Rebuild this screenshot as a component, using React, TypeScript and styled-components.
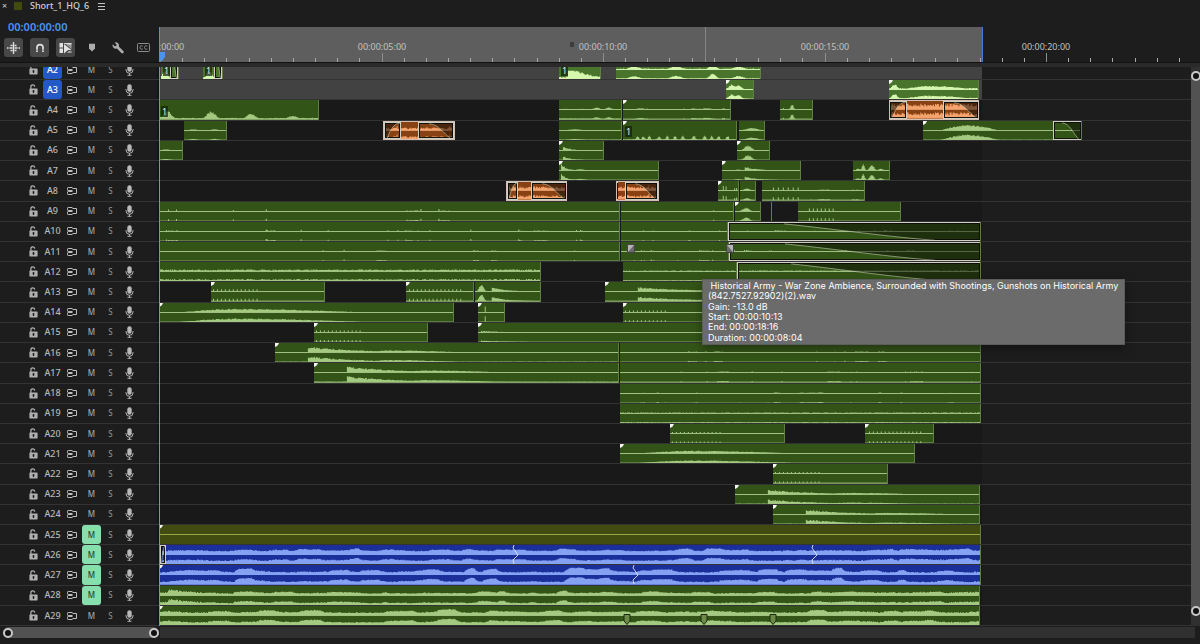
import React from 'react';
import styled, { createGlobalStyle, css } from 'styled-components';

const HEAD = 159;
const END = 982;
const PX_PER_SECOND = 44.3;

const GlobalStyle = createGlobalStyle`
  * { box-sizing: border-box; }
  body { margin: 0; background: #1d1d1d; overflow: hidden; }
  button { font: inherit; color: inherit; border: 0; padding: 0; background: none; }
  svg { display: block; }
`;

/* ---------- waveform synthesis ---------- */

type Shape = (x: number, rnd: () => number) => number;

const random = (seed: number) => () => {
  seed = (seed * 1664525 + 1013904223) % 4294967296;
  return seed / 4294967296;
};

const hump = (center: number, width: number, height: number): Shape => (x, r) => {
  const d = (x - center) / width;
  return height * Math.exp(-d * d) * (0.85 + r() * 0.3);
};
const swell = (from: number, peak: number, to: number, height: number): Shape => (x, r) => {
  if (x < from || x > to) return 0;
  const k = x < peak ? (x - from) / (peak - from) : (to - x) / (to - peak);
  return height * Math.sin((k * Math.PI) / 2) * (0.75 + r() * 0.3);
};
const decay = (from: number, length: number, height: number): Shape => (x, r) =>
  x < from ? 0 : height * Math.exp(-(x - from) / length) * (0.75 + r() * 0.35);
const dots = (from: number, to: number, period: number, height: number): Shape => (x) =>
  x < from || x > to ? 0 : (x - from) % period < 1 ? height : 0;
const spikes = (at: number[], height: number): Shape => (x, r) =>
  at.some((s) => Math.abs(s - x) < 1) ? height * (0.5 + r() * 0.5) : 0;
const hiss = (level: number): Shape => (_x, r) => level * (0.5 + r() * 0.5);
const sparse = (height: number): Shape => {
  let hold = 0;
  return (_x, r) => {
    if (hold > 0) {
      hold -= 1;
      return 0.5 + r() * 0.7;
    }
    const v = r();
    if (v > 0.985) hold = Math.floor(r() * 14);
    return v > 0.965 ? height * (0.5 + r() * 0.5) : 0;
  };
};
const music = (base: number, height: number): Shape => {
  let target = 0;
  let level = 0;
  let left = 0;
  return (_x, r) => {
    if (left <= 0) {
      left = 5 + r() * 16;
      target = r() * r() * height;
    }
    left -= 1;
    level += (target - level) * 0.3;
    return base + level + r() * 0.9;
  };
};

const wavePath = (from: number, to: number, baseline: number, shapes: Shape[], seed: number) => {
  const r = random(seed);
  let d = `M0 ${baseline}`;
  for (let x = from; x < to; x += 1) {
    const amp = Math.min(8.4, Math.max(0, ...shapes.map((s) => s(x, r))));
    d += `V${(baseline - amp).toFixed(1)}H${x - from + 1}`;
  }
  return `${d}V${baseline}Z`;
};

/* ---------- sequence data ---------- */

type Tone = 'green' | 'bright' | 'orange' | 'blue' | 'olive';
interface Fade { from: number; to: number; dir: 'in' | 'out' | 'long' }
interface Clip {
  from: number;
  to: number;
  wave: () => Shape[];
  tone?: Tone;
  mono?: boolean;
  corner?: boolean;
  badge?: boolean;
  framed?: boolean;
  fades?: Fade[];
}
interface Track {
  name: string;
  targeted?: boolean;
  muted?: boolean;
  clips: Clip[];
  cuts?: number[];
  markers?: number[];
  transitions?: number[];
}

const clip = (from: number, to: number, wave: () => Shape[], extra: Partial<Clip> = {}): Clip => ({ from, to, wave, ...extra });
const c = { corner: true };
const orange = (from: number, to: number, fades: Fade[], level = 3.4) =>
  clip(from, to, () => [hiss(level), sparse(level + 2)], { tone: 'orange', framed: true, fades });
const none = () => [];
const burst = (x: number, h: number) => () => [decay(x, 52, h), swell(x + 55, x + 80, x + 160, h * 0.4), hiss(0.5)];

const tracks: Track[] = [
  {
    name: 'A2',
    targeted: true,
    clips: [
      clip(161, 179, () => [hiss(2.5), hump(165, 4, 8)], { tone: 'bright', mono: true, badge: true, fades: [{ from: 170, to: 178, dir: 'out' }] }),
      clip(203, 223, () => [hiss(2.5), hump(209, 4, 8)], { tone: 'bright', mono: true, badge: true, fades: [{ from: 214, to: 222, dir: 'out' }] }),
      clip(559, 601, () => [decay(568, 20, 13), hiss(3)], { tone: 'bright', mono: true, badge: true, ...c }),
      clip(616, 761, () => [hiss(1), hump(634, 7, 3), hump(676, 8, 3), hump(713, 5, 5), hump(739, 7, 3)], { tone: 'bright' }),
    ],
  },
  {
    name: 'A3',
    targeted: true,
    clips: [
      clip(726, 754, () => [hump(732, 5, 4.5), hump(738, 5, 4), hiss(0.5)], { tone: 'bright', ...c }),
      clip(889, 979, () => [hump(894, 4, 5), swell(900, 930, 979, 3.6), hiss(1.6)], { tone: 'bright', ...c }),
    ],
  },
  {
    name: 'A4',
    clips: [
      clip(159, 319, () => [hiss(1.4), hump(167, 6, 7), hump(211, 6, 7), hump(251, 6, 5), hump(293, 7, 3)], { mono: true, badge: true }),
      clip(559, 622, () => [hump(597, 4, 2), hump(609, 4, 2), hiss(0.8)]),
      clip(623, 731, () => [sparse(1.5), hump(640, 5, 1.3), hump(707, 7, 1.3)], c),
      clip(780, 813, () => [hump(792, 2, 5), sparse(2)]),
      orange(889, 979, [{ from: 889, to: 907, dir: 'in' }, { from: 943, to: 979, dir: 'out' }], 6.5),
    ],
  },
  {
    name: 'A5',
    clips: [
      clip(184, 227, () => [hump(193, 5, 1.3), hump(215, 5, 1.3)]),
      orange(383, 455, [{ from: 384, to: 401, dir: 'in' }, { from: 418, to: 454, dir: 'out' }]),
      clip(559, 622, () => [hiss(0.6), hump(575, 10, 1.2)]),
      clip(623, 737, () => [637, 643, 649, 659, 667, 675, 683, 694, 705, 712, 719, 728].map((x) => hump(x, 2, 4)).concat(hiss(1.2)), { mono: true, badge: true, ...c }),
      clip(739, 765, () => [hump(752, 9, 2.4)]),
      clip(923, 1082, () => [swell(939, 968, 1000, 5.5), hiss(0.4)], { ...c, fades: [{ from: 1053, to: 1082, dir: 'out' }] }),
    ],
  },
  {
    name: 'A6',
    clips: [
      clip(159, 183, () => [hump(166, 6, 1.2)]),
      clip(559, 604, () => [decay(563, 9, 3.6)], c),
      clip(737, 770, () => [hump(748, 5, 4.6)], c),
    ],
  },
  {
    name: 'A7',
    clips: [
      clip(559, 659, () => [decay(561, 6, 6), hump(580, 6, 1.3)], c),
      clip(722, 801, () => [decay(745, 14, 3.4), hump(738, 4, 1)], c),
      clip(853, 890, () => [hump(858, 3, 2), hump(863, 2, 5.5), hump(872, 3, 5.5), hump(881, 3, 2)]),
    ],
  },
  {
    name: 'A8',
    clips: [
      orange(506, 567, [{ from: 507, to: 518, dir: 'in' }, { from: 531, to: 567, dir: 'out' }], 4.4),
      orange(616, 659, [{ from: 616, to: 618, dir: 'in' }, { from: 625, to: 658, dir: 'out' }], 4.4),
      clip(718, 739, () => [spikes([723, 726], 6), spikes([735, 737], 3)], c),
      clip(740, 756, () => [hump(747, 4, 2)]),
      clip(762, 865, () => [dots(773, 800, 5, 3), sparse(1)]),
    ],
  },
  {
    name: 'A9',
    clips: [
      clip(159, 620, () => [sparse(2.6)]),
      clip(621, 734, () => [sparse(2.4)]),
      clip(735, 761, () => [hump(746, 5, 3.4)], c),
      clip(771, 772, none),
      clip(798, 901, () => [dots(809, 836, 4, 3)]),
    ],
  },
  {
    name: 'A10',
    clips: [
      clip(159, 620, () => [sparse(2.2)]),
      clip(621, 728, () => [sparse(1.6)]),
      clip(728, 981, () => [sparse(1.6)], { fades: [{ from: 728, to: 981, dir: 'long' }] }),
    ],
  },
  {
    name: 'A11',
    transitions: [631, 730],
    clips: [
      clip(159, 620, () => [sparse(2)]),
      clip(621, 729, () => [sparse(1.6)]),
      clip(729, 981, () => [sparse(2)], { fades: [{ from: 729, to: 981, dir: 'long' }] }),
    ],
  },
  {
    name: 'A12',
    clips: [
      clip(159, 541, () => [hiss(2.2)]),
      clip(623, 737, () => [hiss(1.1)]),
      clip(737, 981, () => [hiss(1.2)], { fades: [{ from: 737, to: 981, dir: 'long' }] }),
    ],
  },
  {
    name: 'A13',
    clips: [
      clip(211, 325, () => [dots(213, 260, 4, 2.4)], c),
      clip(406, 474, () => [dots(409, 463, 4, 2.4)], c),
      clip(475, 541, () => [hump(481, 3, 7), decay(492, 16, 4)]),
      clip(605, 800, () => [decay(638, 60, 4)], c),
    ],
  },
  {
    name: 'A14',
    clips: [
      clip(159, 454, () => [swell(176, 235, 370, 3.6)], c),
      clip(478, 505, () => [spikes([485], 7)], c),
      clip(623, 800, () => [dots(625, 667, 4, 2)], c),
    ],
  },
  {
    name: 'A15',
    clips: [
      clip(314, 428, () => [dots(316, 363, 4, 2.2)], c),
      clip(478, 800, () => [decay(481, 30, 1.6)], c),
    ],
  },
  { name: 'A16', clips: [clip(275, 619, burst(308, 5.5), c), clip(620, 981, () => [sparse(1.4)])] },
  { name: 'A17', clips: [clip(314, 619, burst(347, 5.5), c), clip(620, 981, () => [sparse(1.3)])] },
  { name: 'A18', clips: [clip(620, 981, () => [sparse(0.9)])] },
  { name: 'A19', clips: [clip(620, 981, () => [hiss(1.2)])] },
  { name: 'A20', clips: [clip(670, 785, () => [dots(672, 720, 4, 1.6)], c), clip(865, 934, () => [dots(869, 923, 4, 2)], c)] },
  { name: 'A21', clips: [clip(620, 915, () => [swell(635, 694, 800, 2.8)], c)] },
  { name: 'A22', clips: [clip(773, 888, () => [dots(775, 822, 4, 1.6)], c)] },
  { name: 'A23', clips: [clip(735, 980, burst(768, 4.4), c)] },
  { name: 'A24', clips: [clip(773, 980, burst(806, 4.4), c)] },
  { name: 'A25', muted: true, clips: [clip(159, 981, none, { tone: 'olive', ...c })] },
  { name: 'A26', muted: true, cuts: [515, 814], clips: [clip(159, 981, () => [music(3, 3.2)], { tone: 'blue', fades: [{ from: 160, to: 166, dir: 'in' }] })] },
  { name: 'A27', muted: true, cuts: [635], clips: [clip(159, 981, () => [music(1.8, 5)], { tone: 'blue', ...c })] },
  { name: 'A28', muted: true, clips: [clip(159, 980, () => [decay(168, 50, 6), music(1.6, 3.8)])] },
  { name: 'A29', markers: [627, 704, 773], clips: [clip(159, 980, () => [music(2.4, 3.8)], c)] },
];

const tones: Record<Tone, { bg: string; wave: string; line: string }> = {
  green: { bg: '#335417', wave: '#a3ca80', line: '#a0c082' },
  bright: { bg: '#48742b', wave: '#d5f6ad', line: '#d0efb0' },
  orange: { bg: '#874113', wave: '#f4a36c', line: '#e09a6a' },
  blue: { bg: '#1a2f99', wave: '#85a1f2', line: '#85a1f2' },
  olive: { bg: '#424b10', wave: '#98a446', line: '#98a446' },
};

/* ---------- shell ---------- */

const Panel = styled.main`
  position: relative;
  display: flex;
  flex-direction: column;
  height: 100vh;
  min-height: 600px;
  overflow: hidden;
  background: #1d1d1d;
  color: #b4b4b4;
  font-family: 'Noto Sans', 'Open Sans', sans-serif;
  font-size: 9px;
  line-height: 12px;
`;
const TabBar = styled.header`
  display: flex;
  align-items: center;
  height: 14px;
  flex: none;
  padding: 0 3px 2px 2px;
  color: #d0d0d0;
`;
const CloseTab = styled.button`
  width: 5px;
`;
const Swatch = styled.span`
  width: 8px;
  height: 8px;
  margin: 0 8px 1px 7px;
  background: #414b10;
`;
const TabTitle = styled.span`
  font-weight: 500;
  margin-right: 9px;
`;
const Top = styled.div`
  display: flex;
  flex: none;
  height: 49px;
  border-bottom: 1px solid #111;
`;
const Controls = styled.div`
  width: ${HEAD}px;
  flex: none;
  display: flex;
  flex-direction: column;
  justify-content: space-between;
  padding: 6px 0 5px 4px;
`;
const Timecode = styled.div`
  padding-left: 4px;
  font-size: 11px;
  line-height: 14px;
  font-weight: 600;
  color: #4b94ee;
`;
const Tools = styled.div`
  display: flex;
  align-items: center;
  gap: 7px;
`;
const Tool = styled.button<{ $on?: boolean }>`
  display: grid;
  place-items: center;
  width: 19px;
  height: 19px;
  border-radius: 3px;
  color: ${(p) => (p.$on ? '#e2e2e2' : '#acacac')};
  background: ${(p) => (p.$on ? '#484848' : 'transparent')};
`;
const Band = styled.div`
  height: 4px;
  flex: none;
  background: #2a2a2a;
`;

/* ---------- ruler ---------- */

const Ruler = styled.div`
  position: relative;
  flex: 1;
  margin-top: 13px;
  border-left: 1px solid #5a8fd6;
  overflow: hidden;
`;
const Span = styled.div`
  width: ${END - HEAD}px;
  height: 100%;
  background: #5e5e5e;
  border-right: 1px solid #4a7bd0;
`;
const Ticks = styled.svg`
  position: absolute;
  inset: 0;
  width: 100%;
  height: 100%;
`;
const TimeLabel = styled.span`
  position: absolute;
  top: 14px;
  transform: translateX(-50%);
  color: #c2c2c2;
`;

const TimeRuler = () => {
  const step = PX_PER_SECOND / 2;
  return (
    <Ruler>
      <Span />
      <Ticks>
        {Array.from({ length: 47 }, (_, i) => (
          <rect key={i} x={Math.round(i * step)} y={i % 10 ? 31 : 26} width="1" height={i % 10 ? 4 : 9} fill={i % 10 ? '#a8a8a8' : '#8e8e8e'} />
        ))}
        <rect x="545" y="0" width="1" height="35" fill="#868686" />
        <rect x="410" y="15" width="4" height="5" fill="#3d3d3d" />
        <path d="M0 25h5v5l-3 4h-2z" fill="#4b94ee" />
      </Ticks>
      {['00', '05', '10', '15', '20'].map((s) => (
        <TimeLabel key={s} style={{ left: Math.round(Number(s) * PX_PER_SECOND) }}>
          00:00:{s}:00
        </TimeLabel>
      ))}
    </Ruler>
  );
};

/* ---------- tracks ---------- */

const Body = styled.div`
  display: flex;
  flex: 1;
  min-height: 0;
`;
const Viewport = styled.div`
  position: relative;
  flex: 1;
  min-width: 0;
  display: flex;
  flex-direction: column;
  overflow: hidden;
`;
const TrackList = styled.div`
  flex: 1;
  margin-top: -7px;
  display: flex;
  flex-direction: column;
`;
const Row = styled.section`
  flex: 1 1 0;
  min-height: 0;
  display: flex;
  border-bottom: 1px solid #333;
`;
const HeadRow = styled.div`
  width: ${HEAD}px;
  flex: none;
  display: grid;
  grid-template-columns: 9px 19px 10px 19px 19px 19px;
  column-gap: 5px;
  padding-left: 29px;
  border-right: 2px solid #161616;
  & > :nth-child(n + 5) { margin: 0 5px 0 -5px; }
  & > :nth-child(6) { margin: 0 10px 0 -10px; }
`;
const HeadCell = styled.button<{ $fill?: string; $ink?: string; $name?: boolean }>`
  display: flex;
  align-items: center;
  justify-content: center;
  border-radius: 3px;
  font-size: ${(p) => (p.$name ? 9 : 8)}px;
  font-weight: 500;
  white-space: nowrap;
  color: ${(p) => p.$ink ?? '#a4a4a4'};
  background: ${(p) => p.$fill ?? 'transparent'};
`;
const Lane = styled.div<{ $targeted?: boolean }>`
  position: relative;
  flex: 1;
  background: linear-gradient(
    to right,
    ${(p) => (p.$targeted ? '#424242' : '#191919')} ${END - HEAD}px,
    #1d1d1d ${END - HEAD}px
  );
`;
const ClipBox = styled.div<{ $tone: Tone; $framed?: boolean }>`
  position: absolute;
  top: 0;
  bottom: 0;
  overflow: hidden;
  background: ${(p) => tones[p.$tone].bg};
  border-right: 1px solid #5f7d45;
  ${(p) => p.$framed && css`border: 1px solid #d2bfb2;`}
`;
const Wave = styled.svg`
  position: absolute;
  inset: 0;
  width: 100%;
  height: 100%;
`;
const Badge = styled.span`
  position: absolute;
  left: 2px;
  bottom: 3px;
  width: 7px;
  height: 11px;
  background: rgba(20, 30, 12, 0.7);
  color: #eee;
  line-height: 11px;
  text-align: center;
`;
const FadeBox = styled.div`
  position: absolute;
  top: 0;
  bottom: 0;
  border: 1px solid #cfcfc4;
  outline: 1px solid #14140f;
  outline-offset: -2px;
  overflow: hidden;
`;
const Overlay = styled.svg`
  position: absolute;
  width: 16px;
  transform: translateX(-50%);
`;
const Playhead = styled.div`
  position: absolute;
  top: 0;
  bottom: 0;
  left: ${HEAD}px;
  width: 1px;
  background: #5a9bea;
`;

const fadeCurves = {
  in: { area: 'M0 0H100Q50 0 14 20H0Z', line: 'M14 20Q50 0 100 0' },
  out: { area: 'M100 0V20H92C72 14 60 2 30 1L0 0Z', line: 'M92 20C72 14 60 2 30 1' },
  long: { area: 'M100 0V20H82C66 17 42 7 22 1L0 0Z', line: 'M82 20C66 17 42 7 22 1' },
};

const ClipView = ({ data, seed }: { data: Clip; seed: number }) => {
  const tone = data.tone ?? 'green';
  const { wave, line } = tones[tone];
  const width = data.to - data.from;
  const channels = data.mono ? [19] : [9.5, 19];
  return (
    <ClipBox $tone={tone} $framed={data.framed} style={{ left: data.from - HEAD, width }}>
      <Wave viewBox={`0 0 ${width} 19`} preserveAspectRatio="none">
        {channels.map((y) => (
          <g key={y}>
            <path d={wavePath(data.from, data.to, y, data.wave(), seed)} fill={wave} />
            {(tone !== 'olive' || y < 19) && <rect x="0" y={y - 0.6} width={width} height="1" fill={line} />}
          </g>
        ))}
        {data.corner && <path d="M0 0h4l-1 2-1 1-2 1z" fill="#f4f4f0" />}
      </Wave>
      {data.badge && <Badge>1</Badge>}
      {data.fades?.map((f) => (
        <FadeBox key={f.from} style={{ left: f.from - data.from - (data.framed ? 1 : 0), width: f.to - f.from }}>
          <Wave viewBox="0 0 100 20" preserveAspectRatio="none">
            <path d={fadeCurves[f.dir].area} fill="#0a0a05" fillOpacity="0.5" />
            <path d={fadeCurves[f.dir].line} fill="none" stroke="#c4cfae" strokeOpacity="0.6" vectorEffect="non-scaling-stroke" />
          </Wave>
        </FadeBox>
      ))}
    </ClipBox>
  );
};

/* ---------- icons ---------- */

const LockIcon = () => (
  <svg width="9" height="11" viewBox="0 0 9 11">
    <path d="M1.900 5.200V2.900a1.900 1.900 0 0 1 3.800-.3" fill="none" stroke="#b0b0b0" strokeWidth="1.200" />
    <path fillRule="evenodd" d="M1 4.600h7a.6.6 0 0 1 .6.6v4.600a.6.6 0 0 1-.6.6H1a.6.6 0 0 1-.6-.6V5.200a.6.6 0 0 1 .6-.6ZM4.500 6.100a1 1 0 0 0-.6 1.800v1.200h1.200V7.900a1 1 0 0 0-.6-1.800Z" fill="#b0b0b0" />
  </svg>
);
const SyncIcon = () => (
  <svg width="10" height="8" viewBox="0 0 10 8" fill="none" stroke="#bebebe">
    <path d="M5.500 3.500H1.200a.7.7 0 0 1-.7-.7V1.200a.7.7 0 0 1 .7-.7h4.300M5.500 4.500H1.200a.7.7 0 0 0-.7.7v1.600a.7.7 0 0 0 .7.7h4.300" />
    <path d="M5.500 1.500h4v5h-4" />
  </svg>
);
const MicIcon = () => (
  <svg width="9" height="12" viewBox="0 0 9 12">
    <rect x="2.300" y="0.300" width="4.400" height="7.400" rx="2.200" fill="#b8b8b8" />
    <path d="M1 5v.8a3.500 3.500 0 0 0 7 0V5M4.500 9.300v2M2.500 11.300h4" fill="none" stroke="#b2b2b2" />
  </svg>
);
const NestIcon = () => (
  <svg width="13" height="12" viewBox="0 0 13 12" fill="none" stroke="currentColor" strokeWidth="1.300">
    <path d="M6.500 0v3M6.500 9V12M3.500 3.500h2M7.500 3.500h2M0 6h1.500M2.500 6h3M7.500 6h3M11.500 6H13M3.500 8.500h2M7.500 8.500h2M6.500 3v6" />
  </svg>
);
const MagnetIcon = () => (
  <svg width="10" height="10" viewBox="0 0 10 10" fill="none" stroke="currentColor" strokeWidth="1.700">
    <path d="M2 9V4.600a3 3 0 0 1 6 0V9" />
    <path d="M.8 7.100h2.500M6.700 7.100h2.500" stroke="#484848" strokeWidth=".6" />
  </svg>
);
const LinkedIcon = () => (
  <svg width="13" height="12" viewBox="0 0 13 12">
    <path d="M.5 1h3.500v4.500H.5zM.5 6.500h3.500V11H.5zM5 1h7.500v1.500L5 1.800z" fill="currentColor" />
    <path d="M5 2l7.500 6H9L5 11.500z" fill="currentColor" />
    <path d="M12.500 1.500V7L6.500 2zM9.500 9l3-.2V11H8z" fill="currentColor" fillOpacity=".55" />
  </svg>
);
const MarkerIcon = () => (
  <svg width="8" height="9" viewBox="0 0 8 9">
    <path d="M1 .8h6v4.700L4 8.400 1 5.500z" fill="currentColor" />
  </svg>
);
const WrenchIcon = () => (
  <svg width="12" height="12" viewBox="0 0 12 12">
    <path d="M.8 2.300 2.700 4.200l1.500-.3.300-1.500L2.600.5a3.200 3.200 0 0 1 4.200 4.100l4.500 4.500a1.300 1.300 0 0 1-1.900 1.900L4.900 6.500A3.200 3.200 0 0 1 .8 2.300Z" fill="currentColor" />
  </svg>
);
const CaptionIcon = () => (
  <svg width="13" height="9" viewBox="0 0 13 9" fill="none" stroke="#8c8c8c">
    <rect x=".5" y=".5" width="12" height="8" rx="1" />
    <path d="M5.800 3.200C5.300 2.500 3 2.300 3 4.500s2.300 2 2.800 1.300M10.300 3.200c-.5-.7-2.800-.9-2.800 1.300s2.300 2 2.800 1.300" />
  </svg>
);

/* ---------- scrollers and tooltip ---------- */

const VScroll = styled.div`
  width: 9px;
  flex: none;
  display: flex;
  padding: 4px 0 10px;
  background: #303030;
`;
const HScroll = styled.div`
  flex: none;
  display: flex;
  height: 11px;
  margin: 1px 5px 6px 3px;
  background: linear-gradient(to right, transparent 157px, #303030 157px);
`;
const Thumb = styled.div<{ $vertical?: boolean }>`
  display: flex;
  flex-direction: ${(p) => (p.$vertical ? 'column' : 'row')};
  align-items: center;
  justify-content: space-between;
  flex: ${(p) => (p.$vertical ? '1' : 'none')};
  width: ${(p) => (p.$vertical ? '9px' : '156px')};
  border-radius: 6px;
  background: #525252;
`;
const Knob = styled.span`
  flex: none;
  width: 10px;
  height: 10px;
  border: 2px solid #c8c8c8;
  border-radius: 50%;
  background: #111;
`;
const Tooltip = styled.div`
  position: absolute;
  top: 279px;
  left: 702px;
  width: 423px;
  height: 66px;
  display: grid;
  grid-auto-rows: 1fr;
  align-items: center;
  padding: 1px 5px;
  background: #6b6b6b;
  border: 1px solid #5c5c5c;
  box-shadow: 0 4px 10px rgba(0, 0, 0, 0.35);
  color: #fff;
  font-family: Inter, 'Liberation Sans', sans-serif;
  line-height: 10px;
  white-space: pre;
`;

const App = () => (
  <Panel>
    <GlobalStyle />
    <TabBar>
      <CloseTab aria-label="Close tab">×</CloseTab>
      <Swatch />
      <TabTitle>Short_1_HQ_6</TabTitle>
      <svg width="7" height="7" viewBox="0 0 7 7" stroke="#c4c4c4">
        <path d="M0 .5h7M0 3.500h7M0 6.500h7" />
      </svg>
    </TabBar>
    <Top>
      <Controls>
        <Timecode>00:00:00:00</Timecode>
        <Tools>
          <Tool $on aria-label="Nest sequences"><NestIcon /></Tool>
          <Tool $on aria-label="Snap"><MagnetIcon /></Tool>
          <Tool $on aria-label="Linked selection"><LinkedIcon /></Tool>
          <Tool aria-label="Add marker"><MarkerIcon /></Tool>
          <Tool aria-label="Display settings"><WrenchIcon /></Tool>
          <Tool aria-label="Captions"><CaptionIcon /></Tool>
        </Tools>
      </Controls>
      <TimeRuler />
    </Top>
    <Band />
    <Body>
      <Viewport>
        <TrackList>
          {tracks.map((t, i) => (
            <Row key={t.name}>
              <HeadRow>
                <HeadCell aria-label="Lock"><LockIcon /></HeadCell>
                <HeadCell $name $fill={t.targeted ? '#2358c6' : undefined} $ink={t.targeted ? '#fff' : '#b8b8b8'}>{t.name}</HeadCell>
                <HeadCell aria-label="Sync lock"><SyncIcon /></HeadCell>
                <HeadCell $fill={t.muted ? '#86dfad' : undefined} $ink={t.muted ? '#1d4a33' : undefined}>M</HeadCell>
                <HeadCell $ink="#8c8c8c">S</HeadCell>
                <HeadCell aria-label="Record voice-over"><MicIcon /></HeadCell>
              </HeadRow>
              <Lane $targeted={t.targeted}>
                {t.clips.map((d, k) => (
                  <ClipView key={d.from} data={d} seed={i * 97 + k * 31 + 7} />
                ))}
                {t.cuts?.map((x) => (
                  <Overlay key={x} style={{ left: x - HEAD }} height="19" viewBox="0 0 16 19">
                    <path d="M7 0 6 3l5 7-5 5 1 4" fill="none" stroke="#dfe6ff" strokeWidth="0.9" />
                  </Overlay>
                ))}
                {t.markers?.map((x) => (
                  <Overlay key={x} style={{ left: x - HEAD, bottom: 0 }} height="11" viewBox="0 0 16 11">
                    <path d="M5 .5h6v6.500L8 10.500 5 7z" fill="#6b8a48" stroke="#1d280f" />
                  </Overlay>
                ))}
                {t.transitions?.map((x) => (
                  <Overlay key={x} style={{ left: x - HEAD, top: 2 }} height="9" viewBox="0 0 16 9">
                    <rect x="4.500" y=".5" width="7" height="8" fill="#b5b5b5" stroke="#444" />
                    <path d={x < 700 ? 'M5 8 11 1v7z' : 'M5 1l6 7H5z'} fill="#6b6b6b" />
                  </Overlay>
                ))}
              </Lane>
            </Row>
          ))}
        </TrackList>
        <Playhead />
      </Viewport>
      <VScroll>
        <Thumb $vertical><Knob /><Knob /></Thumb>
      </VScroll>
    </Body>
    <HScroll>
      <Thumb><Knob /><Knob /></Thumb>
    </HScroll>
    <Tooltip role="tooltip">
      <span>{' Historical Army - War Zone Ambience, Surrounded with Shootings, Gunshots on Historical Army'}</span>
      <span>(842.7527.92902)(2).wav</span>
      <span>Gain: -13.0 dB</span>
      <span>Start: 00:00:10:13</span>
      <span>End: 00:00:18:16</span>
      <span>Duration: 00:00:08:04</span>
    </Tooltip>
  </Panel>
);

export default App;
